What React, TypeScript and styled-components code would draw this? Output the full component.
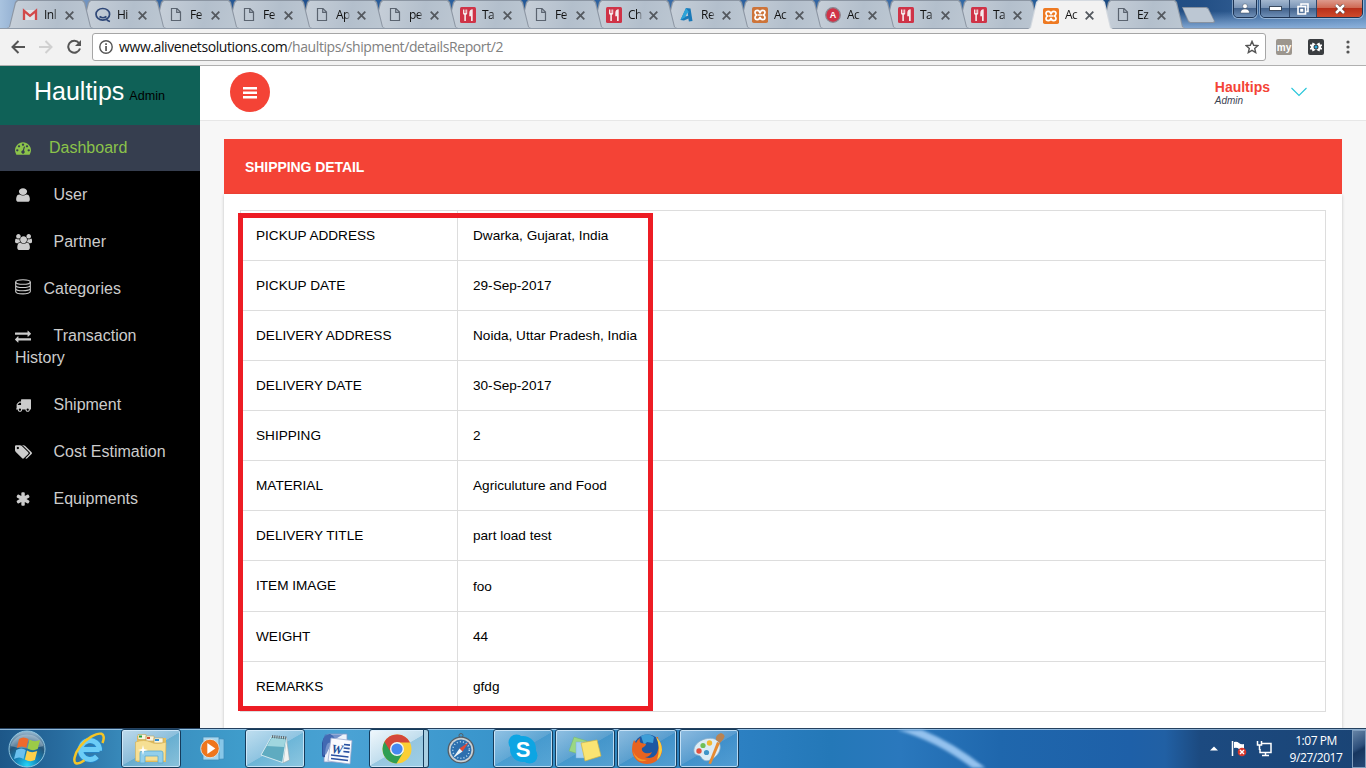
import React from 'react';
import styled, { createGlobalStyle, css } from 'styled-components';

const Global = createGlobalStyle`
  * { box-sizing: border-box; }
  body { margin: 0; overflow: hidden; background: #fff; }
`;

const sans = '"Liberation Sans", Arial, sans-serif';
const ui = '"Open Sans", "Noto Sans", sans-serif';

const Screen = styled.div`
  width: 1366px;
  height: 768px;
  display: flex;
  flex-direction: column;
  overflow: hidden;
  font-family: ${sans};
`;

/* ---------- browser chrome ---------- */

const TabStrip = styled.div`
  position: relative;
  flex: none;
  height: 29px;
  display: flex;
  align-items: flex-start;
  padding-left: 7px;
  background:
    linear-gradient(90deg, transparent 1180px, #f2f2f2 1180px) 0 28px no-repeat,
    linear-gradient(180deg, rgba(160, 195, 235, 0) 40%, rgba(160, 195, 235, 0.75)) 1110px 0 no-repeat,
    linear-gradient(90deg, #a9c3df 0, #7f9fc6 30px, #6f93c0 90px, #2d5f9b 170px, #1f4f8c 300px, #2c62a0 420px, #1f5595 560px, #3d70a9 640px, #2b5f9e 760px, #3e6ea6 900px, #2c66a4 1000px, #1b4a80 1110px, #234f85 1200px, #4f7db0 1366px);
  border-bottom: 1px solid #8f9aa8;
`;

const slope = 'polygon(0 100%, 2px 96%, 8px 7%, 10px 0, calc(100% - 10px) 0, calc(100% - 8px) 7%, calc(100% - 2px) 96%, 100% 100%)';

const TabBox = styled.div<{ $z: number; $active?: boolean; $narrow?: boolean }>`
  position: relative;
  z-index: ${p => p.$z};
  flex: none;
  width: ${p => (p.$narrow ? 85 : 86)}px;
  height: ${p => (p.$active ? 29 : 28)}px;
  margin-right: -13px;
  padding: 0 0 0 15px;
  display: flex;
  align-items: center;
  &::before, &::after {
    content: '';
    position: absolute;
    z-index: -1;
    inset: 0;
    clip-path: ${slope};
  }
  &::before { background: ${p => (p.$active ? '#d5dae0' : '#8c96a3')}; }
  &::after {
    inset: 1px 1px 0 1px;
    background: ${p => (p.$active ? '#f2f2f2' : 'linear-gradient(100deg, #c9d1da, #b3bfcc 60%, #bcc7d2)')};
  }
`;

const Favicon = styled.span`
  flex: none;
  width: 16px;
  height: 16px;
  margin-top: 2px;
  svg { display: block; }
`;

const TabTitle = styled.span<{ $narrow?: boolean }>`
  flex: none;
  width: 14px;
  margin: 1px ${p => (p.$narrow ? 6 : 7)}px 0 6px;
  overflow: hidden;
  white-space: nowrap;
  font: 12px/18px ${ui};
  letter-spacing: -0.5px;
  color: #111;
  mask-image: linear-gradient(90deg, #000 70%, transparent 105%);
`;

const CloseIcon = styled.svg`
  flex: none;
  width: 9px;
  height: 9px;
  margin-top: 2px;
  stroke: #54595f;
  stroke-width: 1.8;
`;

const NewTab = styled.div`
  align-self: flex-start;
  width: 33px;
  height: 16px;
  margin: 7px 0 0 10px;
  background: #8892a0;
  clip-path: polygon(0 0, 74% 0, 80% 7%, 100% 92%, 97% 100%, 24% 100%, 19% 93%);
  &::after {
    content: '';
    display: block;
    height: 14px;
    margin: 1px;
    background: #bcc7d3;
    clip-path: polygon(0 0, 74% 0, 80% 7%, 100% 92%, 97% 100%, 24% 100%, 19% 93%);
  }
`;

const WindowControls = styled.div`
  position: absolute;
  top: -1px;
  right: 3px;
  display: flex;
  gap: 3px;
`;

const ControlGroup = styled.div`
  display: flex;
  height: 19px;
  border: 1px solid #1d3352;
  border-radius: 0 0 5px 5px;
  overflow: hidden;
  box-shadow: 0 0 0 1px rgba(200, 220, 240, 0.55);
`;

const Control = styled.div<{ $w: number; $close?: boolean }>`
  width: ${p => p.$w}px;
  display: flex;
  align-items: center;
  justify-content: center;
  background: ${p =>
    p.$close
      ? 'linear-gradient(#dd9a8c 0, #cf6a54 45%, #b8301a 50%, #cf4a2c 100%)'
      : 'linear-gradient(#a3b7cf 0, #7a94b6 45%, #42628c 50%, #6f8fb6 100%)'};
  & + & { border-left: 1px solid #30486a; }
`;

const Toolbar = styled.div`
  flex: none;
  height: 37px;
  display: flex;
  align-items: center;
  padding: 0 11px;
  background: #f2f2f2;
  border-bottom: 1px solid #b0b0b0;
`;

const NavButtons = styled.div`
  display: flex;
  gap: 12px;
  width: 81px;
  svg { display: block; }
`;

const AddressBar = styled.div`
  width: 1174px;
  height: 28px;
  display: flex;
  align-items: center;
  padding: 0 6px;
  background: #fff;
  border: 1px solid #a6a6a6;
  border-radius: 3px;
`;

const Url = styled.div`
  flex: 1;
  margin-left: 6px;
  font: 14px/20px ${ui};
  letter-spacing: -0.41px;
  color: #808080;
  white-space: nowrap;
  b { font-weight: 400; color: #111; }
`;

const Extensions = styled.div`
  flex: 1;
  display: flex;
  align-items: center;
  padding-left: 10px;
`;

const MyBadge = styled.span`
  width: 16px;
  height: 16px;
  border-radius: 2px;
  background: #9c968e;
  color: #fff;
  font: bold 10px/18px ${sans};
  text-align: center;
`;

const GearBadge = styled.span`
  width: 16px;
  height: 16px;
  margin: 0 22px 0 16px;
  border-radius: 2px;
  background: #3a3d40;
`;

/* ---------- application ---------- */

const Page = styled.div`
  flex: 1;
  min-height: 0;
  display: flex;
  background: #f7f7f7;
`;

const Sidebar = styled.nav`
  flex: none;
  width: 200px;
  background: #000;
`;

const Brand = styled.div`
  height: 59px;
  padding: 10px 0 0 34px;
  background: #0f6157;
  color: #fff;
  font-size: 25px;
  line-height: 31px;
  white-space: nowrap;
  small { margin-left: -2px; font-size: 12.6px; color: #000; }
`;

const MenuItem = styled.a<{ $active?: boolean }>`
  display: block;
  margin-bottom: 1px;
  padding: 12px 15px;
  font-size: 16px;
  line-height: 22px;
  color: ${p => (p.$active ? '#8bc34a' : '#ccc')};
  background: ${p => (p.$active ? '#363e4f' : 'transparent')};
`;

const MenuIcon = styled.span<{ $w: number }>`
  display: inline-flex;
  align-items: center;
  vertical-align: top;
  width: ${p => p.$w}px;
  height: 22px;
`;

const Main = styled.main`
  flex: 1;
  min-width: 0;
  display: flex;
  flex-direction: column;
`;

const TopBar = styled.header`
  flex: none;
  height: 55px;
  display: flex;
  justify-content: space-between;
  padding: 6px 58px 0 30px;
  background: #fff;
  border-bottom: 1px solid #e7e7e7;
`;

const MenuToggle = styled.button`
  width: 40px;
  height: 40px;
  padding: 1px 0 0;
  border: 0;
  border-radius: 50%;
  background: #f44336;
  display: flex;
  align-items: center;
  justify-content: center;
`;

const Account = styled.div`
  display: flex;
  align-items: flex-start;
  gap: 20px;
  padding-top: 7px;
  svg { margin-top: 8px; }
`;

const AccountName = styled.div`
  font-size: 14px;
  font-weight: bold;
  line-height: 16px;
  color: #f44336;
  em {
    display: block;
    font-size: 10px;
    font-weight: normal;
    line-height: 11px;
    color: #3c4252;
  }
`;

const Card = styled.section`
  flex: 1;
  display: flex;
  flex-direction: column;
  margin: 18px 24px 0;
`;

const CardTitle = styled.h2`
  flex: none;
  height: 55px;
  margin: 0;
  padding-left: 21px;
  background: #f44336;
  color: #fff;
  font-size: 14px;
  letter-spacing: -0.07px;
  line-height: 56px;
`;

const CardBody = styled.div`
  position: relative;
  flex: 1;
  padding: 16px 16px 0;
  background: #fff;
  box-shadow: 0 1px 3px rgba(0, 0, 0, 0.22);
`;

const Table = styled.div`
  border: 1px solid #ddd;
  border-bottom: 0;
`;

const Row = styled.div<{ $tall?: boolean }>`
  display: grid;
  grid-template-columns: 216px 1fr;
  height: ${p => (p.$tall ? 51 : 50)}px;
  border-bottom: 1px solid #ddd;
  font-size: 13.6px;
  color: #000;
`;

const Cell = styled.div<{ $drop?: boolean }>`
  padding: ${p => (p.$drop ? 16 : 15)}px 15px 0;
  line-height: 19px;
  & + & { border-left: 1px solid #ddd; }
`;

const Highlight = styled.div`
  position: absolute;
  left: 14px;
  top: 19px;
  width: 415px;
  height: 498px;
  border: 5px solid #ed1c24;
`;

/* ---------- taskbar ---------- */

const Taskbar = styled.footer`
  position: relative;
  z-index: 1;
  flex: none;
  height: 40px;
  display: flex;
  border-top: 1px solid #25415f;
  box-shadow: inset 0 1px 0 rgba(190, 220, 245, 0.7);
  background: linear-gradient(90deg, #1d5788 0, #286c9f 60px, #3788b9 120px, #3f9ccb 240px, #4aa2d4 350px, #3b97cd 470px, #3187c0 620px, #2c80c2 740px, #2478b8 830px, #2a78bd 900px, #1f67ad 1000px, #1e60a8 1130px, #2160a4 1165px, #1c4a80 1200px, #1a4475 1366px);
`;

const Swoosh = styled.svg`
  position: absolute;
  left: 850px;
  top: 1px;
  filter: blur(1.5px);
`;

const StartSlot = styled.div`
  width: 59px;
  padding-top: 1px;
  z-index: 1;
`;

const TaskSlots = styled.div`
  display: flex;
  gap: 2px;
  z-index: 1;
`;

const Task = styled.div<{ $look?: 'open' | 'active' | 'bright' }>`
  position: relative;
  width: 60px;
  height: 39px;
  display: flex;
  align-items: center;
  justify-content: center;
  border: 1px solid transparent;
  border-radius: 3px;
  ${p =>
    p.$look &&
    css`
      border-color: #153c5c;
      box-shadow: inset 0 0 0 1px rgba(220, 240, 255, 0.75);
      background: ${p.$look === 'open'
        ? 'linear-gradient(150deg, rgba(205,225,245,.6) 0, rgba(160,200,230,.38) 50%, rgba(110,180,225,.3) 51%, rgba(140,200,235,.4) 100%)'
        : p.$look === 'bright'
          ? 'linear-gradient(150deg, rgba(235,245,252,.75) 0, rgba(195,222,238,.6) 50%, rgba(150,205,225,.5) 51%, rgba(190,225,235,.6) 100%)'
          : 'linear-gradient(150deg, rgba(255,255,255,.92) 0, rgba(225,238,245,.8) 50%, rgba(185,215,230,.7) 51%, rgba(190,225,238,.75) 100%)'};
    `}
`;

const StackEdge = styled.span`
  position: absolute;
  right: -1px;
  top: -1px;
  width: 6px;
  height: 39px;
  border: 1px solid #153c5c;
  border-radius: 0 3px 3px 0;
  background: #a9cfe2;
`;

const IconNudge = styled.span`
  display: flex;
  margin-right: 5px;
`;

const Tray = styled.div`
  margin-left: auto;
  display: flex;
  align-items: center;
  z-index: 1;
  color: #fff;
  svg { display: block; }
`;

const TrayIcons = styled.div`
  display: flex;
  align-items: center;
  gap: 9px;
  svg:first-child { margin-right: 4px; }
`;

const Clock = styled.div`
  width: 72px;
  margin-left: 8px;
  text-align: center;
  font: 12px/17px ${ui};
  letter-spacing: -0.45px;
`;

const ShowDesktop = styled.div`
  width: 14px;
  height: 38px;
  align-self: flex-end;
  border: 1px solid #7f9dbd;
  background: linear-gradient(150deg, #6583a5, #2d4f7b 45%, #17365f 55%, #264a77);
`;

/* ---------- icon drawings ---------- */

const dot = 'q0 53 -37.5 90.5t-90.5 37.5t-90.5 -37.5t-37.5 -90.5t37.5 -90.5t90.5 -37.5t90.5 37.5t37.5 90.5z';

const glyphs: Record<string, [number, string]> = {
  dashboard: [1792, `M384 384${dot}M576 832${dot}M1004 351l101 382q6 26 -7.5 48.5t-38.5 29.5t-48 -6.5t-30 -39.5l-101 -382q-60 -5 -107 -43.5t-63 -98.5q-20 -77 20 -146t117 -89t146 20t89 117q16 60 -6 117t-72 91zM1664 384${dot}M1024 1024${dot}M1472 832${dot}M1792 384q0 -261 -141 -483q-19 -29 -54 -29h-1402q-35 0 -54 29q-141 221 -141 483q0 182 71 348t191 286t286 191t348 71t348 -71t286 -191t191 -286t71 -348z`],
  user: [1280, 'M1280 137q0 -109 -62.5 -187t-150.5 -78h-854q-88 0 -150.5 78t-62.5 187q0 85 8.5 160.5t31.5 152t58.5 131t94 89t134.5 34.5q131 -128 313 -128t313 128q76 0 134.5 -34.5t94 -89t58.5 -131t31.5 -152t8.5 -160.5zM1024 1024q0 -159 -112.5 -271.5t-271.5 -112.5t-271.5 112.5t-112.5 271.5t112.5 271.5t271.5 112.5t271.5 -112.5t112.5 -271.5z'],
  users: [1920, 'M593 640q-162 -5 -265 -128h-134q-82 0 -138 40.5t-56 118.5q0 353 124 353q6 0 43.5 -21t97.5 -42.5t119 -21.5q67 0 133 23q-5 -37 -5 -66q0 -139 81 -256zM1664 3q0 -120 -73 -189.5t-194 -69.5h-874q-121 0 -194 69.5t-73 189.5q0 53 3.5 103.5t14 109t26.5 108.5t43 97.5t62 81t85.5 53.5t111.5 20q10 0 43 -21.5t73 -48t107 -48t135 -21.5t135 21.5t107 48t73 48t43 21.5q61 0 111.5 -20t85.5 -53.5t62 -81t43 -97.5t26.5 -108.5t14 -109t3.5 -103.5zM640 1280q0 -106 -75 -181t-181 -75t-181 75t-75 181t75 181t181 75t181 -75t75 -181zM1344 896q0 -159 -112.5 -271.5t-271.5 -112.5t-271.5 112.5t-112.5 271.5t112.5 271.5t271.5 112.5t271.5 -112.5t112.5 -271.5zM1920 671q0 -78 -56 -118.5t-138 -40.5h-134q-103 123 -265 128q81 117 81 256q0 29 -5 66q66 -23 133 -23q59 0 119 21.5t97.5 42.5t43.5 21q124 0 124 -353zM1792 1280q0 -106 -75 -181t-181 -75t-181 75t-75 181t75 181t181 75t181 -75t75 -181z'],
  exchange: [1792, 'M1792 352v-192q0 -13 -9.5 -22.5t-22.5 -9.5h-1376v-192q0 -13 -9.5 -22.5t-22.5 -9.5q-12 0 -24 10l-319 320q-9 9 -9 22q0 14 9 23l320 320q9 9 23 9q13 0 22.5 -9.5t9.5 -22.5v-192h1376q13 0 22.5 -9.5t9.5 -22.5zM1792 896q0 -14 -9 -23l-320 -320q-9 -9 -23 -9q-13 0 -22.5 9.5t-9.5 22.5v192h-1376q-13 0 -22.5 9.5t-9.5 22.5v192q0 13 9.5 22.5t22.5 9.5h1376v192q0 14 9 23t23 9q12 0 24 -10l319 -319q9 -9 9 -23z'],
  truck: [1792, 'M640 128q0 52 -38 90t-90 38t-90 -38t-38 -90t38 -90t90 -38t90 38t38 90zM256 640h384v256h-158q-13 0 -22 -9l-195 -195q-9 -9 -9 -22v-30zM1536 128q0 52 -38 90t-90 38t-90 -38t-38 -90t38 -90t90 -38t90 38t38 90zM1792 1216v-1024q0 -15 -4 -26.5t-13.5 -18.5t-16.5 -11.5t-23.5 -6t-22.5 -2t-25.5 0t-22.5 0.5q0 -106 -75 -181t-181 -75t-181 75t-75 181h-384q0 -106 -75 -181t-181 -75t-181 75t-75 181h-64q-3 0 -22.5 -0.5t-25.5 0t-22.5 2t-23.5 6t-16.5 11.5t-13.5 18.5t-4 26.5q0 26 19 45t45 19v320q0 8 -0.5 35t0 38t2.5 34.5t6.5 37t14 30.5t22.5 30l198 198q19 19 50.5 32t58.5 13h160v192q0 26 19 45t45 19h1024q26 0 45 -19t19 -45z'],
  tags: [1920, 'M448 1088q0 53 -37.5 90.5t-90.5 37.5t-90.5 -37.5t-37.5 -90.5t37.5 -90.5t90.5 -37.5t90.5 37.5t37.5 90.5zM1515 512q0 -53 -37 -90l-491 -492q-39 -37 -91 -37q-53 0 -90 37l-715 716q-38 37 -64.5 101t-26.5 117v416q0 52 38 90t90 38h416q53 0 117 -26.5t102 -64.5l715 -714q37 -39 37 -91zM1899 512q0 -53 -37 -90l-491 -492q-39 -37 -91 -37q-36 0 -59 14t-53 45l470 470q37 37 37 90q0 52 -37 91l-715 714q-38 38 -102 64.5t-117 26.5h224q53 0 117 -26.5t102 -64.5l715 -714q37 -39 37 -91z'],
  asterisk: [1664, 'M1482 486q46 -26 59.5 -77.5t-12.5 -97.5l-64 -110q-26 -46 -77.5 -59.5t-97.5 12.5l-266 153v-307q0 -52 -38 -90t-90 -38h-128q-52 0 -90 38t-38 90v307l-266 -153q-46 -26 -97.5 -12.5t-77.5 59.5l-64 110q-26 46 -12.5 97.5t59.5 77.5l266 154l-266 154q-46 26 -59.5 77.5t12.5 97.5l64 110q26 46 77.5 59.5t97.5 -12.5l266 -153v307q0 52 38 90t90 38h128q52 0 90 -38t38 -90v-307l266 153q46 26 97.5 12.5t77.5 -59.5l64 -110q26 -46 12.5 -97.5t-59.5 -77.5l-266 -154z'],
};

function Glyph({ name }: { name: string }) {
  if (name === 'database') {
    return (
      <svg width="16" height="22" viewBox="0 0 16 22" fill="none" stroke="currentColor" strokeWidth="1.100">
        <ellipse cx="8" cy="4" rx="7.300" ry="2.300" />
        <path d="M.7 4v9.500c0 3.200 14.600 3.200 14.600 0V4M.7 7.200c0 3.100 14.600 3.100 14.600 0M.7 10.400c0 3.100 14.600 3.100 14.600 0" />
      </svg>
    );
  }
  const [w, d] = glyphs[name];
  const boxes: Record<string, string> = {
    user: '-110 -1536 1500 1792',
    asterisk: '-70 -1536 1792 1792',
    truck: '-60 -1536 1852 1792',
  };
  return (
    <svg
      width={boxes[name] ? 16 : (w / 1792) * 16}
      height="16"
      viewBox={boxes[name] ?? `0 -1536 ${w} 1792`}
      preserveAspectRatio="none"
      fill="currentColor"
    >
      <path transform="scale(1,-1)" d={d} />
    </svg>
  );
}

const FileFavicon = () => (
  <svg width="16" height="16" viewBox="0 0 16 16" fill="none" stroke="#5b6470" strokeWidth="1.200">
    <path d="M3.500 1.500h5.500l3.500 3.500v8.500h-9zM8.700 1.500v3.800h3.800" />
  </svg>
);

const GmailFavicon = () => (
  <svg width="16" height="16" viewBox="0 0 16 16">
    <path d="M2 3h12v10H2z" fill="#dfe2e6" />
    <path d="M2 13V3.800l6 5 6-5V13" fill="none" stroke="#d2494a" strokeWidth="2.300" />
  </svg>
);

const ChatFavicon = () => (
  <svg width="16" height="16" viewBox="0 0 16 16" fill="none" stroke="#2f4878" strokeWidth="1.700">
    <ellipse cx="7.800" cy="7.300" rx="6.800" ry="5.800" />
    <path d="M4.500 9.500q3.500 2.500 7 0M11.500 12.500q1.500 1.500 3.500 2" />
  </svg>
);

const FoodFavicon = () => (
  <svg width="16" height="16" viewBox="0 0 16 16">
    <rect width="16" height="16" rx="1.500" fill="#cf3347" />
    <path d="M3 2.500v4q0 1 1.300 1.400V14h1.600V7.900q1.300-.4 1.300-1.400v-4h-1V6h-.7V2.500h-.9V6H4V2.500zM12.700 2.300V14h-1.700V9.300H9.300V6q0-3.500 3.400-3.700z" fill="#f5e9eb" />
  </svg>
);

const ArcFavicon = () => (
  <svg width="16" height="16" viewBox="0 0 16 16">
    <path d="M7 1l4.500.5L13.500 14l-3.600.5-.5-3L5 13.500 1.500 13z" fill="#1a79b8" />
    <path d="M7 1l2.800 4-4 5.500L1.500 13z" fill="#2da3d8" />
    <path d="M8.500 5.500l.7 3.200-2.700.8z" fill="#c0cad5" />
  </svg>
);

const RoundAFavicon = () => (
  <svg width="16" height="16" viewBox="0 0 16 16">
    <circle cx="8" cy="8" r="7.300" fill="#cf3347" stroke="#8c8790" strokeWidth="1.300" />
    <text x="8" y="11.200" textAnchor="middle" fontFamily="Liberation Sans, sans-serif" fontWeight="bold" fontSize="9" fill="#fff">A</text>
  </svg>
);

const XamppFavicon = ({ dim }: { dim?: boolean }) => (
  <svg width="16" height="16" viewBox="0 0 16 16">
    <rect width="16" height="16" rx="1.800" fill={dim ? '#cd7439' : '#ee7a22'} />
    <path
      d="M8 6.300Q7.600 3.300 5.300 3.300Q3 3.300 3 5.400Q3 7 4.600 7.900Q3 8.800 3 10.500Q3 12.600 5.300 12.600Q7.600 12.600 8 9.800Q8.400 12.600 10.700 12.600Q13 12.600 13 10.500Q13 8.800 11.400 7.900Q13 7 13 5.400Q13 3.300 10.700 3.300Q8.400 3.300 8 6.300zM6 8h4"
      fill="none"
      stroke="#fff"
      strokeWidth="1.700"
    />
  </svg>
);

const favicons: Record<string, React.ReactNode> = {
  gmail: <GmailFavicon />,
  chat: <ChatFavicon />,
  file: <FileFavicon />,
  food: <FoodFavicon />,
  arc: <ArcFavicon />,
  round: <RoundAFavicon />,
  xampp: <XamppFavicon dim />,
  xamppActive: <XamppFavicon />,
};

const tabs: [string, string][] = [
  ['gmail', 'Inl'], ['chat', 'Hi'], ['file', 'Fe'], ['file', 'Fe'], ['file', 'Ap'], ['file', 'pe'],
  ['food', 'Ta'], ['file', 'Fe'], ['food', 'Ch'], ['arc', 'Re'], ['xampp', 'Ac'], ['round', 'Ac'],
  ['food', 'Ta'], ['food', 'Ta'], ['xamppActive', 'Ac'], ['file', 'Ez'],
];

const menu: [string, string, number][] = [
  ['dashboard', 'Dashboard', 34],
  ['user', 'User', 38.5],
  ['users', 'Partner', 38.5],
  ['database', 'Categories', 28.5],
  ['exchange', 'Transaction History', 38.5],
  ['truck', 'Shipment', 38.5],
  ['tags', 'Cost Estimation', 38.5],
  ['asterisk', 'Equipments', 38.5],
];

const details: [string, string][] = [
  ['PICKUP ADDRESS', 'Dwarka, Gujarat, India'],
  ['PICKUP DATE', '29-Sep-2017'],
  ['DELIVERY ADDRESS', 'Noida, Uttar Pradesh, India'],
  ['DELIVERY DATE', '30-Sep-2017'],
  ['SHIPPING', '2'],
  ['MATERIAL', 'Agriculuture and Food'],
  ['DELIVERY TITLE', 'part load test'],
  ['ITEM IMAGE', 'foo'],
  ['WEIGHT', '44'],
  ['REMARKS', 'gfdg'],
];

/* ---------- taskbar drawings ---------- */

const StartOrb = () => (
  <svg width="54" height="38" viewBox="0 0 54 38">
    <defs>
      <radialGradient id="orb" cx="50%" cy="95%" r="90%">
        <stop offset="0" stopColor="#25d5f7" />
        <stop offset=".35" stopColor="#1583b8" />
        <stop offset=".7" stopColor="#245579" />
        <stop offset="1" stopColor="#8fb0c8" />
      </radialGradient>
    </defs>
    <circle cx="27" cy="19" r="18" fill="url(#orb)" stroke="#91c7e0" strokeWidth="1" />
    <path d="M10.500 16a17 15 0 0 1 33 0q-16 5-33 0z" fill="#fff" opacity=".28" />
    <path d="M19 9q4-3 9.500 0l-2.200 9q-4-3-9.500 0z" fill="#ee6a2c" />
    <path d="M29.500 9.500q5 3 10.500.5l-2.300 9q-5 2.500-10.200-.5z" fill="#9bcb47" />
    <path d="M16.300 20q5-3 9.500 0l-2.300 9q-4-3-9.500 0z" fill="#6bc1ee" />
    <path d="M27 20.500q4.500 3 10.200.5l-2.300 9q-5 2.500-10-.5z" fill="#fcd04a" />
  </svg>
);

const IeIcon = () => (
  <svg width="34" height="34" viewBox="0 0 34 34" fill="none">
    <path d="M27.500 17.500H9.500M27.500 18.500a9.500 9.500 0 1 0-2.600 6" stroke="#2387cc" strokeWidth="6.500" />
    <path d="M27.500 17.500H9.500M27.500 18.500a9.500 9.500 0 1 0-2.600 6" stroke="#6ccdf7" strokeWidth="5" />
    <path d="M30.500 11c2-5 1.500-8.500-1-9.200C25 .6 14 6.500 8 14.500S1 30 4 31.300c2 .7 5-.5 8.500-3" stroke="#f5c526" strokeWidth="2.500" />
  </svg>
);

const ExplorerIcon = () => (
  <svg width="34" height="32" viewBox="0 0 34 32">
    <path d="M3 3h11l1 2h17v24H3z" fill="#e4bf5d" />
    <path d="M4 1.500h8v5H4zM12 3h8v5h-8zM20 5h9v5h-9z" fill="#f8f4df" stroke="#bfa558" strokeWidth=".6" />
    <path d="M5 2.500h3v2H5z" fill="#1fa03a" /><path d="M13 4h3v2h-3z" fill="#d4492c" /><path d="M21 6h4v2h-4z" fill="#2b8ed8" />
    <path d="M1.500 9q9-3 15 0t15.500 0l-.5 19h-30z" fill="#f6df93" stroke="#d3ae52" strokeWidth=".6" />
    <path d="M6 30V20q0-2 2-2h19q2 0 2 2v10h-5v-7H11v7z" fill="#92cfeb" stroke="#5ba8cf" strokeWidth=".8" />
    <path d="M9 12l1 4 4 1-4 1-1 4-1-4-4-1 4-1z" fill="#fff" />
  </svg>
);

const MediaIcon = () => (
  <svg width="28" height="26" viewBox="0 0 28 26">
    <path d="M8 2l17 1v20l-17 1z" fill="#88c7e8" stroke="#3d8ebc" strokeWidth=".8" />
    <path d="M4 1h16v23H4z" fill="#a5d6ef" stroke="#438eb8" strokeWidth=".8" />
    <circle cx="11" cy="12.500" r="9.300" fill="#ef761d" stroke="#d5dfe2" strokeWidth="1" />
    <path d="M8.300 7v11l8-5.500z" fill="#fff" />
  </svg>
);

const NotepadIcon = () => (
  <svg width="30" height="30" viewBox="0 0 30 30">
    <path d="M26.500 4l3 22-6.500 3z" fill="#f1f3f2" stroke="#99a6a8" strokeWidth=".6" />
    <path d="M11.500 2.500l15 1.500-4 24.500L1 21z" fill="#5fabc0" stroke="#e0eef2" strokeWidth=".9" />
    <path d="M12 3.500l13.500 1.500-1.300 8L7 12z" fill="#a0d6df" />
    <path d="M12 2.500l15 1.500" fill="none" stroke="#626c70" strokeWidth="3" strokeDasharray="1.200 1" />
  </svg>
);

const WordIcon = () => (
  <svg width="32" height="32" viewBox="0 0 32 32">
    <path d="M9 1h17v28H3V8q1-7 6-7z" fill="#eef3fb" stroke="#7f97c6" strokeWidth=".8" />
    <path d="M9 1q-7 1-8 9v12q0 3 3 2 0-11 3-14 4-1 8-1-1-6-6-8z" fill="#2f55a0" />
    <path d="M4 1.500h18l-10 6-7 14-3 .5V7z" fill="#4a70b8" opacity=".75" />
    <path d="M10 5l21 2.500-2 23.500L7 28z" fill="#fafbfe" stroke="#9aabd0" strokeWidth=".8" />
    <text x="10" y="20" transform="rotate(6 10 20)" fontFamily="Liberation Serif, serif" fontSize="13" fontWeight="bold" fontStyle="italic" fill="#234d97">W</text>
    <path d="M23 11.500l6 .7M22.700 15l6 .7M22.400 18.500l6 .7M10 22l17.500 2M10 25.500l17 2" stroke="#2b51a0" strokeWidth="1.700" />
  </svg>
);

const ChromeIcon = () => (
  <svg width="30" height="30" viewBox="0 0 30 30">
    <circle cx="15" cy="15" r="14.500" fill="#fbcf35" />
    <path d="M15 15L2.500 7.700A14.500 14.500 0 0 0 14.500 29.500L21.500 18z" fill="#2f9e53" />
    <path d="M2.500 7.700A14.500 14.500 0 0 1 28 8.500H15L9 18.500z" fill="#d4473a" />
    <circle cx="15" cy="15" r="7" fill="#f4f7f4" />
    <circle cx="15" cy="15" r="5.600" fill="#4688f1" />
  </svg>
);

const SafariIcon = () => (
  <svg width="30" height="31" viewBox="0 0 30 31">
    <circle cx="15" cy="2.500" r="2" fill="none" stroke="#555f66" strokeWidth="1" />
    <circle cx="15" cy="17" r="13.500" fill="#555d65" />
    <circle cx="15" cy="17" r="12.200" fill="#c9d0d4" />
    <circle cx="15" cy="17" r="10.500" fill="#2c6fae" />
    <circle cx="15" cy="17" r="8.300" fill="none" stroke="#b4daf1" strokeWidth="1.500" strokeDasharray="1 2.140" />
    <path d="M23 9l-6.500 9.500-3-3z" fill="#e04a37" /><path d="M7 25l6.500-9.500 3 3z" fill="#edf4f7" />
  </svg>
);

const SkypeIcon = () => (
  <svg width="30" height="30" viewBox="0 0 30 30">
    <circle cx="15" cy="15" r="13" fill="#0da5e3" />
    <circle cx="8.500" cy="8.500" r="8" fill="#0da5e3" /><circle cx="21.500" cy="21.500" r="8" fill="#0da5e3" />
    <text x="15" y="22.500" textAnchor="middle" fontFamily="Liberation Sans, sans-serif" fontWeight="bold" fontSize="22" fill="#fff">S</text>
  </svg>
);

const StickyIcon = () => (
  <svg width="34" height="26" viewBox="0 0 34 26">
    <path d="M6 1l13 4-5 14L1 15z" fill="#9ad783" stroke="#74b56a" strokeWidth=".5" />
    <path d="M8 6h14v16H8z" fill="#a5d2f5" stroke="#79aedb" strokeWidth=".5" />
    <path d="M13 7l16-3 4 16-16 5z" fill="#fae473" stroke="#cdb346" strokeWidth=".7" />
  </svg>
);

const FirefoxIcon = () => (
  <svg width="32" height="32" viewBox="0 0 32 32">
    <circle cx="16.500" cy="15.500" r="14" fill="#1e58a2" />
    <path d="M10 3q7-4 13 1l-1 6-6-1-3 3z" fill="#3e9ed7" />
    <path d="M25 4q6 5 6 13c0 8-7 14-15 14S1 25 1 16q0-5 2-9l2 3q1-3 4-5-1 4 1 5l5 1q0 2-4 4-1 3 3 5 4 1 7-1-2 5-7 5 8 3 12-4 3-7 1-16z" fill="#e8631f" />
    <path d="M25 4q6 5 6 13-1 7-5 10 4-13-1-23z" fill="#f9cd40" />
    <path d="M2 18q3 9 14 9-6 3-10-1Q3 23 2 18z" fill="#f49a2b" />
  </svg>
);

const PaintIcon = () => (
  <svg width="34" height="32" viewBox="0 0 34 32">
    <path d="M13 6C6 8 1 13 2 19c1 4 5 2 7 5 2 4 6 5 11 2 6-3 9-9 8-14-1-6-8-8-15-6z" fill="#dcecf5" stroke="#8aafca" strokeWidth=".8" />
    <circle cx="7" cy="18" r="2.700" fill="#e2513f" /><circle cx="11" cy="12.500" r="2.600" fill="#70bf56" />
    <circle cx="17.500" cy="10" r="2.700" fill="#f2b733" /><circle cx="14.500" cy="19.500" r="2.600" fill="#3f95c8" />
    <path d="M25 9l3 1-9 21-2.500-.5z" fill="#e58a31" />
    <path d="M24 7q-1-5 5-7 5 2 3 5-1 2-4 5z" fill="#b98352" />
  </svg>
);

const tasks: { icon: React.ReactNode; look?: 'open' | 'active' | 'bright'; stacked?: boolean }[] = [
  { icon: <IeIcon /> },
  { icon: <ExplorerIcon />, look: 'bright' },
  { icon: <MediaIcon /> },
  { icon: <NotepadIcon />, look: 'bright' },
  { icon: <WordIcon /> },
  { icon: <IconNudge><ChromeIcon /></IconNudge>, look: 'active', stacked: true },
  { icon: <SafariIcon /> },
  { icon: <SkypeIcon />, look: 'open' },
  { icon: <StickyIcon />, look: 'open' },
  { icon: <FirefoxIcon />, look: 'open' },
  { icon: <PaintIcon />, look: 'open' },
];

function BrowserTabs() {
  return (
    <TabStrip>
      {tabs.map(([icon, title], i) => {
        const active = icon === 'xamppActive';
        const narrow = i >= 13;
        return (
          <TabBox key={i} $z={active ? 30 : 20 - i} $active={active} $narrow={narrow}>
            <Favicon>{favicons[icon]}</Favicon>
            <TabTitle $narrow={narrow}>{title}</TabTitle>
            <CloseIcon viewBox="0 0 9 9"><path d="M.7.7l7.600 7.600M8.300.7L.7 8.300" /></CloseIcon>
          </TabBox>
        );
      })}
      <NewTab />
      <WindowControls>
        <ControlGroup>
          <Control $w={22}>
            <svg width="10" height="11" viewBox="0 0 10 11" fill="#fff" stroke="#3b4a5e" strokeWidth=".5"><circle cx="5" cy="3.200" r="2.400" /><path d="M.5 10q0-4 4.500-4t4.500 4z" /></svg>
          </Control>
        </ControlGroup>
        <ControlGroup>
          <Control $w={28}>
            <svg width="13" height="5" viewBox="0 0 13 5"><rect x=".5" y=".5" width="12" height="4" fill="#fff" stroke="#3b4a5e" /></svg>
          </Control>
          <Control $w={27}>
            <svg width="12" height="12" viewBox="0 0 12 12" fill="none" stroke="#fff" strokeWidth="1.600"><path d="M4 2.500V1h7v7.500H9.500M1 3.500h7.500V11H1zM4 6.500h1.500v1.500H4z" /></svg>
          </Control>
          <Control $w={46} $close>
            <svg width="12" height="10" viewBox="0 0 12 10"><path d="M2 1l8 8M10 1L2 9" stroke="#4a2a28" strokeWidth="3.800" /><path d="M2 1l8 8M10 1L2 9" stroke="#fff" strokeWidth="2.600" /></svg>
          </Control>
        </ControlGroup>
      </WindowControls>
    </TabStrip>
  );
}

function BrowserToolbar() {
  return (
    <Toolbar>
      <NavButtons>
        <svg width="16" height="16" viewBox="0 0 16 16" fill="none" stroke="#555" strokeWidth="2"><path d="M14 8H1.500M7.500 2l-6 6 6 6" /></svg>
        <svg width="16" height="16" viewBox="0 0 16 16" fill="none" stroke="#d0d0d0" strokeWidth="2"><path d="M0 8h12.500M6.500 2l6 6-6 6" /></svg>
        <svg width="16" height="16" viewBox="0 0 16 16"><path d="M12 4A6 6 0 1 0 13 9.500" fill="none" stroke="#555" strokeWidth="2" /><path d="M14 1v6H8z" fill="#555" /></svg>
      </NavButtons>
      <AddressBar>
        <svg width="14" height="14" viewBox="0 0 14 14"><circle cx="7" cy="7" r="6.200" fill="none" stroke="#555" strokeWidth="1.400" /><path d="M6.200 3.200h1.700v1.700H6.200zM6.200 6h1.700v5H6.200z" fill="#555" /></svg>
        <Url><b>www.alivenetsolutions.com</b>/haultips/shipment/detailsReport/2</Url>
        <svg width="14" height="14" viewBox="0 0 14 14" fill="none" stroke="#555" strokeWidth="1.400"><path d="M7 1.400l1.700 3.900 4.200.3-3.200 2.800 1 4.200L7 10.400l-3.700 2.200 1-4.200L1.100 5.600l4.200-.3z" /></svg>
      </AddressBar>
      <Extensions>
        <MyBadge>my</MyBadge>
        <GearBadge>
          <svg width="16" height="16" viewBox="0 0 16 16"><path d="M4.500 3.500l2 1L8 6l1.500-1.500 2-1L12 5.500h2v1.700h-1v1.600h1v1.700h-2l-.5 2-2-1L8 10l-1.500 1.500-2 1-.5-2H2V8.800h1V7.200H2V5.500h2z" fill="#fff" /><circle cx="8" cy="8" r="2.500" fill="#3a3d40" /><circle cx="8" cy="8" r="1.500" fill="#28a9df" /></svg>
        </GearBadge>
        <svg width="4" height="14" viewBox="0 0 4 14" fill="#555"><circle cx="2" cy="2" r="1.600" /><circle cx="2" cy="7" r="1.600" /><circle cx="2" cy="12" r="1.600" /></svg>
      </Extensions>
    </Toolbar>
  );
}

export default function App() {
  return (
    <Screen>
      <Global />
      <BrowserTabs />
      <BrowserToolbar />
      <Page>
        <Sidebar>
          <Brand>Haultips <small>Admin</small></Brand>
          {menu.map(([icon, label, w], i) => (
            <MenuItem key={label} $active={i === 0}>
              <MenuIcon $w={w}><Glyph name={icon} /></MenuIcon>{label}
            </MenuItem>
          ))}
        </Sidebar>
        <Main>
          <TopBar>
            <MenuToggle aria-label="Toggle menu">
              <svg width="14" height="12" viewBox="0 0 14 12" fill="#fff"><path d="M0 0h14v2.400H0zM0 4.500h14v2.400H0zM0 9h14v2.400H0z" /></svg>
            </MenuToggle>
            <Account>
              <AccountName>Haultips<em>Admin</em></AccountName>
              <svg width="18" height="10" viewBox="0 0 18 10" fill="none" stroke="#26c6da" strokeWidth="1.100"><path d="M1.500 1L9 8.500 16.500 1" /></svg>
            </Account>
          </TopBar>
          <Card>
            <CardTitle>SHIPPING DETAIL</CardTitle>
            <CardBody>
              <Table>
                {details.map(([label, value]) => {
                  const image = label === 'ITEM IMAGE';
                  return (
                    <Row key={label} $tall={image}>
                      <Cell>{label}</Cell>
                      <Cell $drop={image}>{value}</Cell>
                    </Row>
                  );
                })}
              </Table>
              <Highlight />
            </CardBody>
          </Card>
        </Main>
      </Page>
      <Taskbar>
        <Swoosh width="160" height="38" viewBox="0 0 160 38">
          <path d="M48 -4Q92 8 134 42" fill="none" stroke="#94c2ee" strokeWidth="8" />
        </Swoosh>
        <StartSlot><StartOrb /></StartSlot>
        <TaskSlots>
          {tasks.map((t, i) => (
            <Task key={i} $look={t.look}>
              {t.icon}
              {t.stacked && <StackEdge />}
            </Task>
          ))}
        </TaskSlots>
        <Tray>
          <TrayIcons>
            <svg width="8" height="5" viewBox="0 0 8 5"><path d="M0 4.500L4 .5l4 4z" fill="#fff" /></svg>
            <svg width="16" height="17" viewBox="0 0 16 17"><path d="M1.500 1v15" stroke="#fff" strokeWidth="1.500" /><path d="M3 2q3-1 5 1t5 1v6q-3 1-5-1t-5-1z" fill="#fff" /><circle cx="11" cy="12" r="4.300" fill="#d8372b" /><path d="M9 10l4 4M13 10l-4 4" stroke="#fff" strokeWidth="1.400" /></svg>
            <svg width="16" height="17" viewBox="0 0 16 17" fill="none" stroke="#fff"><path d="M6 3.500h9v9H4V9" strokeWidth="1.500" /><path d="M6 15.500h7M9.500 13v2M1.500 1v4h4V1M3.500 5v5" strokeWidth="1.500" /></svg>
          </TrayIcons>
          <Clock>1:07 PM<br />9/27/2017</Clock>
          <ShowDesktop />
        </Tray>
      </Taskbar>
    </Screen>
  );
}
